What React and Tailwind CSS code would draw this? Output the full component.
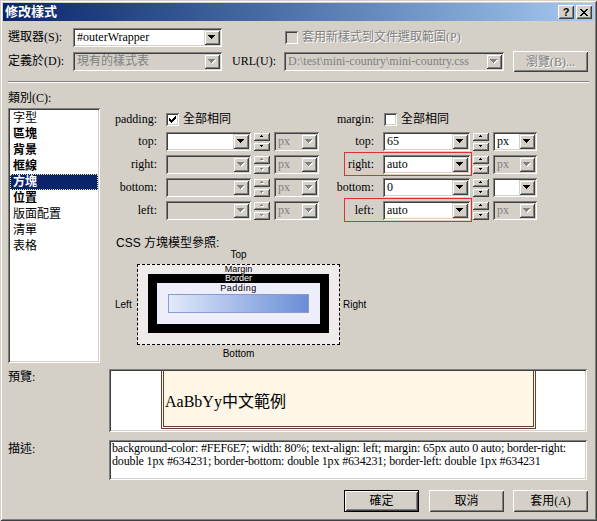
import React from 'react';
import clsx from 'clsx';

const SERIF = "font-['Liberation_Serif','Noto_Sans_CJK_TC',serif]";
const SANS = "font-['Liberation_Sans','Noto_Sans_CJK_TC',sans-serif]";

// classic 3D bevels
const sunken = 'shadow-[inset_1px_1px_0_#808080,inset_-1px_-1px_0_#fff,inset_2px_2px_0_#404040,inset_-2px_-2px_0_#D4D0C8]';
const raised = 'shadow-[inset_1px_1px_0_#D4D0C8,inset_-1px_-1px_0_#404040,inset_2px_2px_0_#fff,inset_-2px_-2px_0_#808080]';
const button = 'shadow-[inset_1px_1px_0_#fff,inset_-1px_-1px_0_#404040,inset_2px_2px_0_#D4D0C8,inset_-2px_-2px_0_#808080]';
const emboss = 'text-[#808080] [text-shadow:1px_1px_0_#fff]';

const Arrow = ({ up, small, disabled }) => {
    const rows = small ? [[1, 1], [0, 3]] : [[3, 1], [2, 3], [1, 5], [0, 7]];
    const list = up ? rows : [...rows].reverse();
    const w = small ? 3 : 7;
    const draw = (fill, off) =>
        list.map(([x, rw], i) => <rect key={fill + i} x={x + off} y={i + off} width={rw} height={1} fill={fill} />);
    return (
        <svg width={w + 1} height={list.length + 1} className="block">
            {disabled && draw('#fff', 1)}
            {draw(disabled ? '#808080' : '#000', 0)}
        </svg>
    );
};

const Combo = ({ cls, value, disabled, muted }) => (
    <div className={clsx('h-[19px] p-[2px] flex shrink-0', sunken, disabled ? 'bg-[#D4D0C8]' : 'bg-white', cls)}>
        <div className={clsx('flex-1 min-w-0 pl-[2px] text-[12px] leading-[15px] whitespace-nowrap overflow-hidden', SERIF, disabled || muted ? 'text-[#808080]' : 'text-black')}>
            {value}
        </div>
        <div className={clsx('w-[16px] h-[15px] flex items-center justify-center bg-[#D4D0C8]', raised)}>
            <Arrow disabled={disabled} />
        </div>
    </div>
);

const Spin = ({ disabled }) => (
    <div className="w-[17px] h-[19px] flex flex-col gap-[1px] shrink-0">
        <div className={clsx('h-[9px] flex items-center justify-center bg-[#D4D0C8]', raised)}>
            <Arrow up small disabled={disabled} />
        </div>
        <div className={clsx('h-[9px] flex items-center justify-center bg-[#D4D0C8]', raised)}>
            <Arrow small disabled={disabled} />
        </div>
    </div>
);

const tick = [[6, 0, 1], [5, 1, 2], [0, 2, 1], [4, 2, 3], [0, 3, 2], [3, 3, 3], [0, 4, 5], [1, 5, 3], [2, 6, 1]];

const Check = ({ checked, disabled, cls }) => (
    <div className={clsx('w-[13px] h-[13px] flex items-center justify-center shrink-0', sunken, disabled ? 'bg-[#D4D0C8]' : 'bg-white', cls)}>
        {checked && (
            <svg width="7" height="7" className="block">
                {tick.map(([x, y, w], i) => <rect key={i} x={x} y={y} width={w} height={1} fill="#000" />)}
            </svg>
        )}
    </div>
);

const closeGlyph = [[0, 0, 2], [6, 0, 2], [1, 1, 2], [5, 1, 2], [2, 2, 4], [3, 3, 2], [2, 4, 4], [1, 5, 2], [5, 5, 2], [0, 6, 2], [6, 6, 2]];

const categories = [
    ['字型', false], ['區塊', true], ['背景', true], ['框線', true], ['方塊', true],
    ['位置', true], ['版面配置', false], ['清單', false], ['表格', false],
];

const paddingRows = [
    { label: 'top:', enabled: true },
    { label: 'right:' },
    { label: 'bottom:' },
    { label: 'left:' },
];

const marginRows = [
    { label: 'top:', value: '65', unit: 'px', unitOn: true },
    { label: 'right:', value: 'auto', unit: 'px', mark: true },
    { label: 'bottom:', value: '0', unit: '', unitOn: true },
    { label: 'left:', value: 'auto', unit: 'px', mark: true },
];

const App = () => {
    return (
        <div className={clsx('w-[597px] h-[521px] bg-[#D4D0C8] p-[3px] flex flex-col text-black text-[12px] overflow-hidden', raised, SERIF)}>
            {/* Title bar */}
            <div className="h-[18px] shrink-0 flex items-center bg-linear-to-r from-[#0A246A] to-[#A6CAF0] pl-[2px] pr-[2px]">
                <span className={clsx('flex-1 text-white font-bold text-[13px] leading-[18px]', SANS)}>修改樣式</span>
                <div className={clsx('w-[16px] h-[14px] flex items-center justify-center bg-[#D4D0C8]', button)}>
                    <span className={clsx('text-[11px] leading-[11px] font-bold', SANS)}>?</span>
                </div>
                <div className={clsx('w-[16px] h-[14px] ml-[2px] flex items-center justify-center bg-[#D4D0C8]', button)}>
                    <svg width="8" height="7" className="block">
                        {closeGlyph.map(([x, y, w], i) => <rect key={i} x={x} y={y} width={w} height={1} fill="#000" />)}
                    </svg>
                </div>
            </div>

            <div className="flex-1 flex flex-col pl-[5px]">
                {/* Selector row */}
                <div className="mt-[7px] h-[19px] flex items-center">
                    <span className="w-[65px] leading-[19px]">選取器(S):</span>
                    <Combo cls="w-[149px]" value="#outerWrapper" />
                    <Check disabled cls="ml-[63px]" />
                    <span className={clsx('ml-[4px] leading-[19px]', emboss)}>套用新樣式到文件選取範圍(P)</span>
                </div>

                {/* Defined in row */}
                <div className="mt-[5px] h-[19px] flex items-center">
                    <span className="w-[65px] leading-[19px]">定義於(D):</span>
                    <Combo cls="w-[149px]" value="現有的樣式表" disabled />
                    <span className="ml-[10px] w-[52px] leading-[19px]">URL(U):</span>
                    <Combo cls="w-[220px]" value="D:\test\mini-country\mini-country.css" disabled />
                    <div className={clsx('ml-[9px] w-[75px] h-[21px] flex items-center justify-center bg-[#D4D0C8]', button)}>
                        <span className={clsx('leading-[14px]', emboss)}>瀏覽(B)...</span>
                    </div>
                </div>

                <div className="mt-[10px] w-[581px] h-[2px] border-t border-t-[#808080] border-b border-b-white" />

                <div className="mt-[8px] h-[14px] leading-[14px]">類別(C):</div>

                <div className="mt-[3px] h-[255px] flex">
                    {/* Category list */}
                    <div className={clsx('w-[92px] h-[255px] p-[2px] bg-white shrink-0', sunken)}>
                        {categories.map(([name, bold], i) => (
                            <div
                                key={name}
                                className={clsx(
                                    'h-[16px] pl-[2px] leading-[14px] whitespace-nowrap',
                                    i === 4 ? 'bg-[#0A246A] text-white border border-dotted border-[#E6E6B4]' : 'border border-transparent',
                                    bold && 'font-bold'
                                )}
                            >
                                {name}
                            </div>
                        ))}
                    </div>

                    {/* Box settings */}
                    <div className="flex-1 flex flex-col">
                        <div className="flex">
                            <div className="w-[219px] flex flex-col">
                                <div className="mt-[5px] h-[13px] flex items-center">
                                    <span className="w-[57px] text-right leading-[13px]">padding:</span>
                                    <Check checked cls="ml-[9px]" />
                                    <span className="ml-[4px] leading-[13px]">全部相同</span>
                                </div>
                                {paddingRows.map((r, i) => (
                                    <div key={r.label} className={clsx('h-[19px] flex items-center', i === 0 ? 'mt-[6px]' : 'mt-[4px]')}>
                                        <span className="w-[57px] text-right leading-[19px]">{r.label}</span>
                                        <Combo cls="w-[85px] ml-[9px]" value="" disabled={!r.enabled} />
                                        <div className="ml-[2px]"><Spin disabled={!r.enabled} /></div>
                                        <Combo cls="w-[45px] ml-[4px]" value="px" disabled />
                                    </div>
                                ))}
                            </div>

                            <div className="flex flex-col">
                                <div className="mt-[5px] h-[13px] flex items-center">
                                    <span className="w-[55px] text-right leading-[13px]">margin:</span>
                                    <Check cls="ml-[10px]" />
                                    <span className="ml-[4px] leading-[13px]">全部相同</span>
                                </div>
                                {marginRows.map((r, i) => (
                                    <div key={r.label} className={clsx('relative h-[19px] flex items-center', i === 0 ? 'mt-[6px]' : 'mt-[4px]')}>
                                        <span className="w-[55px] text-right leading-[19px]">{r.label}</span>
                                        <Combo cls="w-[87px] ml-[9px]" value={r.value} />
                                        <div className="ml-[2px]"><Spin /></div>
                                        <Combo cls="w-[44px] ml-[4px]" value={r.unit} disabled={!r.unitOn} />
                                        {r.mark && (
                                            <div className="absolute left-[25px] top-[-3px] w-[128px] h-[24px] border border-[#E0312E] pointer-events-none" />
                                        )}
                                    </div>
                                ))}
                            </div>
                        </div>

                        {/* Box model reference */}
                        <div className={clsx('mt-[16px] pl-[16px] h-[14px] leading-[14px]', SANS)}>CSS 方塊模型參照:</div>
                        <div className={clsx('flex flex-col text-[10px]', SANS)}>
                            <div className="ml-[37px] w-[203px] h-[10px] leading-[10px] text-center">Top</div>
                            <div className="mt-[4px] pl-[15px] flex items-center">
                                <span className="w-[22px] leading-[10px]">Left</span>
                                <div className="w-[203px] h-[81px] border border-dashed border-black bg-[#F0EBEB] flex flex-col items-center text-[9px]">
                                    <div className="h-[9px] leading-[9px]">Margin</div>
                                    <div className="w-[181px] bg-black px-[9px] pb-[9px] flex flex-col items-center">
                                        <div className="h-[9px] leading-[9px] text-white">Border</div>
                                        <div className="w-full bg-[#EEEEFB] px-[11px] pb-[11px] flex flex-col">
                                            <div className="h-[11px] leading-[11px] text-center tracking-[0.5px]">Padding</div>
                                            <div className="h-[19px] border border-[#8A9BD4] bg-linear-to-r from-[#E2E9FA] to-[#6A8DD6]" />
                                        </div>
                                    </div>
                                </div>
                                <span className="ml-[3px] leading-[10px]">Right</span>
                            </div>
                            <div className="mt-[4px] ml-[37px] w-[203px] h-[10px] leading-[10px] text-center">Bottom</div>
                        </div>
                    </div>
                </div>

                {/* Preview */}
                <div className="mt-[6px] flex">
                    <span className="w-[101px] pt-[1px] leading-[14px]">預覽:</span>
                    <div className={clsx('w-[478px] h-[63px] p-[2px] bg-white', sunken)}>
                        <div className="ml-[50px] w-[375px] h-[58px] border-x-[3px] border-b-[3px] border-double border-[#634231] bg-[#FEF6E7] pt-[21px] pl-[1px] text-[16px] leading-[20px]">
                            AaBbYy中文範例
                        </div>
                    </div>
                </div>

                {/* Description */}
                <div className="mt-[8px] flex">
                    <span className="w-[101px] pt-[2px] leading-[14px]">描述:</span>
                    <div className={clsx('w-[478px] h-[40px] pl-[3px] pt-[2px] bg-white text-[12px] leading-[13px] tracking-[-0.15px] whitespace-nowrap', sunken)}>
                        background-color: #FEF6E7; width: 80%; text-align: left; margin: 65px auto 0 auto; border-right:
                        <br />
                        double 1px #634231; border-bottom: double 1px #634231; border-left: double 1px #634231
                    </div>
                </div>

                {/* Dialog buttons */}
                <div className="mt-[10px] ml-[336px] flex">
                    <div className="w-[75px] h-[22px] border border-black">
                        <div className={clsx('w-full h-full flex items-center justify-center bg-[#D4D0C8]', button)}>確定</div>
                    </div>
                    <div className={clsx('ml-[10px] w-[75px] h-[22px] flex items-center justify-center bg-[#D4D0C8]', button)}>取消</div>
                    <div className={clsx('ml-[9px] w-[75px] h-[22px] flex items-center justify-center bg-[#D4D0C8]', button)}>套用(A)</div>
                </div>
            </div>
        </div>
    );
};

export default App;
